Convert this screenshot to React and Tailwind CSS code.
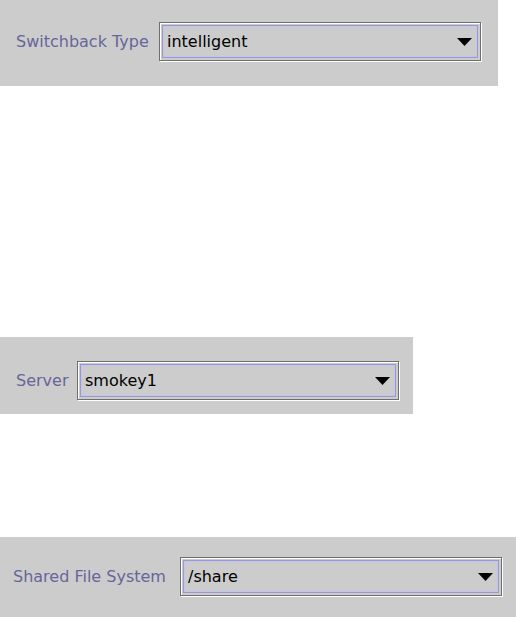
import React from "react";

const font = { fontFamily: '"DejaVu Sans", Verdana, sans-serif' };

function Combo({ value }) {
  return (
    <div className="w-[322px] h-[39px] border border-[#6e6e6e] shadow-[1px_1px_0_#ffffff,inset_1px_1px_0_#ffffff] p-[2px] shrink-0">
      <div className="h-full w-full border border-[#9999cc] shadow-[inset_0_0_0_1px_#c4c4ee] flex items-center pl-[4px] pr-[5px]">
        <span className="flex-1 text-[16px] leading-none text-black" style={font}>
          {value}
        </span>
        <svg width="15" height="8" viewBox="0 0 15 8" className="shrink-0">
          <polygon points="0,0 15,0 7.5,8" fill="#000" />
        </svg>
      </div>
    </div>
  );
}

function Row({ label, value, labelW }) {
  return (
    <div className="flex items-center h-[39px]">
      <span
        className="text-[16px] leading-none text-[#666699] whitespace-nowrap shrink-0"
        style={{ ...font, width: labelW }}
      >
        {label}
      </span>
      <Combo value={value} />
    </div>
  );
}

export default function App() {
  return (
    <div className="w-[516px] h-[617px] bg-white overflow-hidden">
      <div className="w-[498px] h-[86px] bg-[#cccccc] pt-[22px] pl-[16px]">
        <Row label="Switchback Type" value="intelligent" labelW={143} />
      </div>
      <div className="mt-[251px] w-[413px] h-[77px] bg-[#cccccc] pt-[24px] pl-[16px]">
        <Row label="Server" value="smokey1" labelW={61} />
      </div>
      <div className="mt-[123px] w-[516px] h-[80px] bg-[#cccccc] pt-[20px] pl-[13px]">
        <Row label="Shared File System" value="/share" labelW={167} />
      </div>
    </div>
  );
}
